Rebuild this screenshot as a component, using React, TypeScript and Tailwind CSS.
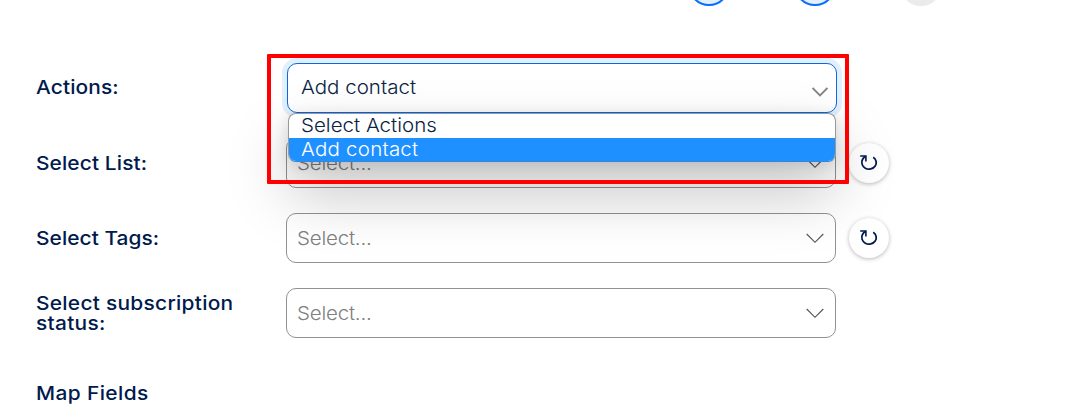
import type { ReactNode } from 'react';

function Chevron({ className }: { className: string }) {
  return (
    <svg className={className} viewBox="0 0 18 11" fill="none" stroke="currentColor" aria-hidden="true">
      <path d="M0.7 1 L9 9.3 L17.3 1" />
    </svg>
  );
}

function RefreshButton() {
  return (
    <button className="ml-[13px] flex h-10 w-10 shrink-0 items-center justify-center rounded-full bg-white text-[#001a4d] shadow-[0_1px_4px_rgba(0,0,0,0.28)]">
      <svg className="h-5 w-5" viewBox="0 0 20 20" fill="none" stroke="currentColor" aria-hidden="true">
        <path d="M14.2 4.3 C17.4 6.2 18.1 10.3 16.2 13 C14.2 16 9.6 17.1 6.3 15.2 C2.9 13.3 1.9 9.2 3.6 6.3 C4.3 5 5.4 4.1 6.6 3.5" strokeWidth="1.8" />
        <path d="M1.2 3 H6.9 V8.4" strokeWidth="1.6" />
      </svg>
    </button>
  );
}

function EmptySelect() {
  return (
    <div className="flex h-[50px] w-[550px] shrink-0 items-center justify-between rounded-[10px] border border-[#929292] bg-white pr-[11px] pl-[10px]">
      <span className="mt-px origin-left scale-x-[1.08] text-[19px] leading-5 font-light tracking-[-0.2px] text-[#808080]">Select...</span>
      <Chevron className="mt-px h-[11px] w-[18px] stroke-[1.15] text-[#555]" />
    </div>
  );
}

function Row({ label, children }: { label: ReactNode; children: ReactNode }) {
  return (
    <div className="flex h-[50px] items-center">
      <div className="mt-0.5 w-[250px] shrink-0 text-[19px] leading-5 font-medium whitespace-nowrap text-[#001a4d]">{label}</div>
      {children}
    </div>
  );
}

export default function App() {
  return (
    <main className="relative h-[406px] w-[1092px] overflow-hidden bg-white font-['Inter','Liberation_Sans',sans-serif]">
      <div className="flex h-[63px] gap-16 pl-[688px]">
        <div className="-mt-9 h-[42px] w-[42px] rounded-full border-2 border-[#0a6cff] bg-[#e3effb]" />
        <div className="-mt-9 h-[42px] w-[42px] rounded-full border-2 border-[#0a6cff] bg-[#e3effb]" />
        <div className="-mt-9 h-[42px] w-[42px] rounded-full bg-[#ebebeb]" />
      </div>
      <div className="flex flex-col gap-[25px] pl-9">
        <Row label={<div className="mb-0.5 origin-left scale-x-[1.1] tracking-[0.1px]">Actions:</div>}>
          <div className="relative ml-px">
            <div className="flex h-[50px] w-[550px] items-center justify-between rounded-[10px] border border-[#0868e8] bg-white pr-2 pl-[13px] shadow-[0_0_0_5px_#e2effc]">
              <span className="origin-left scale-x-[1.08] text-[19px] font-light text-[#082344]">Add contact</span>
              <Chevron className="mt-[7px] h-[10px] w-4 stroke-2 text-[#858585]" />
            </div>
            <div className="absolute top-[50px] left-px z-10 h-[49px] w-[548px] overflow-hidden rounded-[8px] border border-[#999] border-b-[#3188d5] bg-white text-[19px] leading-6 font-light shadow-[0_30px_60px_rgba(0,0,0,0.25),0_4px_16px_rgba(0,0,0,0.14)]">
              <div className="h-6 pl-3 text-[#082344]"><div className="origin-left scale-x-[1.08]">Select Actions</div></div>
              <div className="h-6 bg-[#1e90ff] pl-3 text-white"><div className="origin-left scale-x-[1.08] tracking-[0.2px]">Add contact</div></div>
            </div>
          </div>
        </Row>
        <Row label={<div className="origin-left scale-x-[1.1] tracking-[0.1px]">Select List:</div>}>
          <EmptySelect />
          <RefreshButton />
        </Row>
        <Row label={<div className="origin-left scale-x-[1.1] tracking-[0.05px]">Select Tags:</div>}>
          <EmptySelect />
          <RefreshButton />
        </Row>
        <Row label={<div className="origin-left scale-x-[1.1] tracking-[0.25px]">Select subscription<br />status:</div>}>
          <EmptySelect />
        </Row>
      </div>
      <div className="mt-[46px] pl-9 text-[19px] leading-5 font-medium text-[#001a4d]"><div className="origin-left scale-x-[1.1] tracking-[0.35px]">Map Fields</div></div>
      <div className="pointer-events-none absolute top-[54px] left-[267px] z-20 h-[130px] w-[582px] rounded-[1px] border-4 border-[#ff0000]" />
    </main>
  );
}
